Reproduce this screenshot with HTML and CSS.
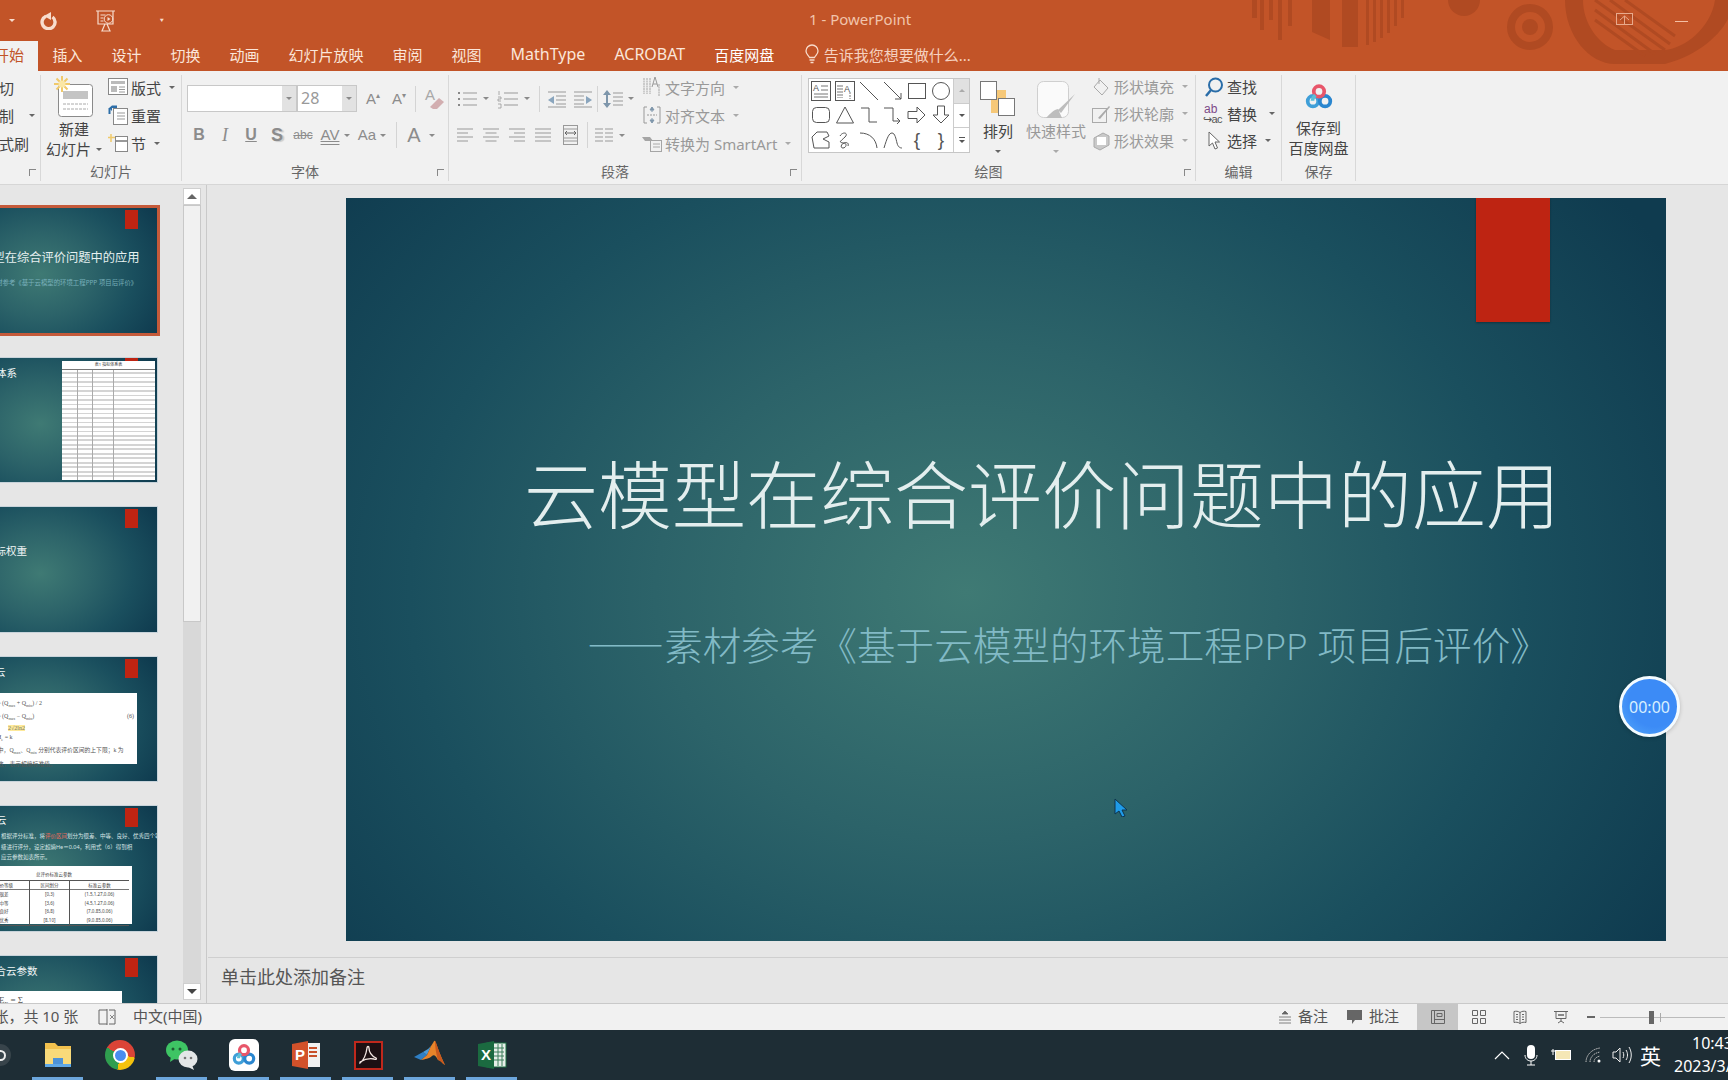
FILE: index.html
```html
<!DOCTYPE html>
<html lang="zh-CN">
<head>
<meta charset="utf-8">
<title>1 - PowerPoint</title>
<link rel="stylesheet" href="styles.css">
</head>
<body>
<svg class="defs" width="0" height="0">
  <defs>
    <symbol id="baidu" viewBox="0 0 30 30">
      <circle cx="8.5" cy="19.5" r="5.6" fill="none" stroke="#3f9fd8" stroke-width="4"/>
      <circle cx="21.5" cy="19.5" r="5.6" fill="none" stroke="#2a86cf" stroke-width="4"/>
      <circle cx="15" cy="9" r="5.6" fill="none" stroke="#e8566a" stroke-width="4"/>
      <path d="M11 13c-2 2-3 4-3 6" fill="none" stroke="#5bc0d8" stroke-width="4"/>
    </symbol>
  </defs>
</svg>

<header class="titlebar">
  <svg class="deco" width="600" height="64" viewBox="0 0 600 64">
    <g fill="#b04a22">
      <rect x="2" y="0" width="5" height="18"/><rect x="10" y="0" width="4" height="30"/><rect x="19" y="0" width="4" height="20"/><rect x="28" y="0" width="4" height="40"/><rect x="38" y="0" width="4" height="26"/>
      <path d="M62 0h18v40l-18-8z"/><rect x="92" y="0" width="16" height="47"/>
      <rect x="116" y="0" width="3" height="45"/><rect x="123" y="0" width="3" height="42"/><rect x="130" y="0" width="3" height="38"/><rect x="137" y="0" width="3" height="33"/><rect x="144" y="0" width="3" height="26"/><rect x="151" y="0" width="3" height="18"/>
      <circle cx="214" cy="0" r="16"/>
    </g>
    <circle cx="280" cy="27" r="19" fill="none" stroke="#b04a22" stroke-width="8"/>
    <circle cx="280" cy="27" r="8" fill="#b04a22"/>
    <path d="M315 0c0 35 24 64 50 64h50c34-8 68-36 68-64h-18c-4 28-30 48-50 50l-50 0c-16-6-32-26-32-50z" fill="#b04a22"/>
    <path d="M345 10l60 44M345 20l50 36M345 0l70 50M360 0l60 44M375 0l50 36" stroke="#b04a22" stroke-width="3"/>
  </svg>
  <div class="qat">
    <span class="caret caret-light"></span>
    <svg class="qat-undo" width="18" height="18" viewBox="0 0 18 18"><path d="M7 4.200A6.500 6.500 0 1 0 13.500 5" fill="none" stroke="#f7dccd" stroke-width="3.400"/><path d="M12 0L12 8 5 4z" fill="#f7dccd"/></svg>
    <svg class="qat-show" width="22" height="24" viewBox="0 0 22 24"><path d="M1 2h19M3 2v13h15V2M5.500 6h5M5.500 9h3M5.500 12h3M10 15l-3 7h8l-3-7" fill="none" stroke="#f7dccd" stroke-width="1.200"/><circle cx="13.500" cy="10" r="4.300" fill="none" stroke="#f7dccd"/><path d="M12.500 8v4l3-2z" fill="#f7dccd"/></svg>
    <span class="qat-more">⯆</span>
  </div>
  <div class="doc-title">1 - PowerPoint</div>
  <svg class="win-restore" width="17" height="12" viewBox="0 0 17 12"><rect x=".5" y=".5" width="16" height="11" fill="none" stroke="#e8a98c"/><path d="M8.500 3v8M4 7l4.500-4L13 7" fill="none" stroke="#e8a98c"/></svg>
  <span class="win-min"></span>
</header>

<nav class="tabs">
  <span class="tab tab-active">开始</span>
  <span class="tab">插入</span>
  <span class="tab">设计</span>
  <span class="tab">切换</span>
  <span class="tab">动画</span>
  <span class="tab">幻灯片放映</span>
  <span class="tab">审阅</span>
  <span class="tab">视图</span>
  <span class="tab tab-en">MathType</span>
  <span class="tab tab-en">ACROBAT</span>
  <span class="tab tab-strong">百度网盘</span>
  <span class="tell">
    <svg width="14" height="20" viewBox="0 0 14 20"><path d="M4.500 13.500C3 11 1 10 1 7a6 6 0 0 1 12 0c0 3-2 4-3.500 6.500zM4.500 16h5M5.500 18.500h3" fill="none" stroke="#f8dccc" stroke-width="1.300"/></svg>
    告诉我您想要做什么...
  </span>
</nav>

<section class="ribbon">
  <div class="group g-clip">
    <div class="stack clip-stack">
      <div class="srow">剪切</div>
      <div class="srow">复制<span class="caret c-clip"></span></div>
      <div class="srow">格式刷</div>
    </div>
    <div class="label"></div>
    <span class="launcher"></span>
  </div>

  <div class="group g-slides">
    <div class="body">
      <div class="big big-new">
        <svg width="42" height="42" viewBox="0 0 42 42">
          <rect x="4.500" y="8.500" width="34" height="32" rx="3" fill="#fff" stroke="#8a8a8a"/>
          <rect x="9" y="15" width="25" height="8" fill="#c4c4c4"/>
          <path d="M9 28h25M9 33h25" stroke="#aaa" stroke-dasharray="3 1"/>
          <g stroke="#f0c96a" stroke-width="2"><path d="M8 0v16M0 8h16M2.500 2.500l11 11M13.500 2.500l-11 11"/></g>
          <circle cx="8" cy="8" r="3.500" fill="#fbe7a6"/>
        </svg>
        <span class="big-text">新建</span>
        <span class="big-text">幻灯片<span class="caret c-near"></span></span>
      </div>
      <div class="stack">
        <div class="srow"><svg width="20" height="20" viewBox="0 0 20 20"><rect x=".5" y="1.500" width="19" height="16" fill="#fff" stroke="#888"/><rect x="3" y="4" width="14" height="3" fill="#bbb"/><rect x="3" y="9" width="6" height="6" fill="#bbb"/><path d="M11 10h6M11 12.500h6M11 15h6" stroke="#999"/></svg>版式<span class="caret c-near"></span></div>
        <div class="srow"><svg width="20" height="22" viewBox="0 0 20 22"><rect x="5.500" y="4.500" width="14" height="16" fill="#fff" stroke="#888"/><path d="M9 9h8M9 12h8M9 15h8" stroke="#999"/><path d="M9 1.500H4L1 4l3 3V4h5z" fill="#2d6ea8"/><path d="M1.500 4v6" stroke="#2d6ea8" stroke-width="2"/></svg>重置</div>
        <div class="srow"><svg width="20" height="20" viewBox="0 0 20 20"><rect x="7.500" y="3.500" width="12" height="15" fill="#fff" stroke="#888"/><rect x="8" y="7" width="11" height="2" fill="#999"/><path d="M3 1v8M0 4.500h7" stroke="#f0c96a" stroke-width="1.500"/></svg>节<span class="caret c-near"></span></div>
      </div>
    </div>
    <div class="label">幻灯片</div>
  </div>

  <div class="group g-font">
    <div class="tool-rows">
      <div class="trow font-r1">
        <span class="combo combo-name"><span class="combo-val"></span><span class="combo-btn"><span class="caret"></span></span></span>
        <span class="combo combo-size"><span class="combo-val">28</span><span class="combo-btn"><span class="caret"></span></span></span>
        <span class="glyph g-w24 grow-a">A<sup>▴</sup></span>
        <span class="glyph g-w24 grow-a">A<sup>▾</sup></span>
        <span class="sep s-a"></span>
        <svg class="clear" width="24" height="24" viewBox="0 0 24 24"><text x="3" y="13" class="mini-a">A</text><path d="M8 20l9-9 5 4-7 7h-4z" fill="#d2aeb0"/></svg>
      </div>
      <div class="trow font-r2">
        <span class="glyph g-w26 g-b">B</span>
        <span class="glyph g-w26 g-i">I</span>
        <span class="glyph g-w26 g-u">U</span>
        <span class="glyph g-w26 g-s">S</span>
        <span class="glyph g-w26 g-abc">abc</span>
        <span class="glyph g-w28 g-av">AV</span><span class="caret c-tight"></span>
        <span class="glyph g-w26 g-aa">Aa</span><span class="caret"></span>
        <span class="sep s-b"></span>
        <span class="glyph g-w22 g-ca">A</span><span class="caret c-ca"></span>
      </div>
    </div>
    <div class="label label-l">字体</div>
    <span class="launcher"></span>
  </div>

  <div class="group g-para">
    <div class="body">
      <div class="tool-rows para-left">
        <div class="trow para-r1">
          <svg width="24" height="24" viewBox="0 0 24 24"><path d="M7 6h14M7 12h14M7 18h14" stroke="#999" stroke-width="1.200"/><path d="M2 6h2M2 12h2M2 18h2" stroke="#888" stroke-width="2"/></svg><span class="caret c-para"></span>
          <svg width="24" height="24" viewBox="0 0 24 24"><path d="M7 6h14M7 12h14M7 18h14" stroke="#999" stroke-width="1.200"/><path d="M2 4v4M1 10h3v2H1v2h3M1 17h3v4H1" fill="none" stroke="#999" stroke-width=".8"/></svg><span class="caret c-para"></span>
          <span class="sep s-p1"></span>
          <svg width="24" height="24" viewBox="0 0 24 24"><path d="M3 5h18M11 9h10M11 13h10M11 17h10M3 20h18" stroke="#999"/><path d="M3 13l6-4v8z" fill="#8aa5bd"/></svg>
          <svg class="m2" width="24" height="24" viewBox="0 0 24 24"><path d="M3 5h18M3 9h10M3 13h10M3 17h10M3 20h18" stroke="#999"/><path d="M21 13l-6-4v8z" fill="#8aa5bd"/></svg>
          <span class="sep s-p2"></span>
          <svg class="m3" width="24" height="24" viewBox="0 0 24 24"><path d="M12 6h10M12 10h10M12 14h10M12 18h10" stroke="#999"/><path d="M6 3l4 5H7v8h3l-4 5-4-5h3V8H2z" fill="#7e96ab"/></svg><span class="caret c-para"></span>
        </div>
        <div class="trow para-r2">
          <svg width="24" height="24" viewBox="0 0 24 24"><path d="M4 6h16M4 10h11M4 14h16M4 18h11" stroke="#999"/></svg>
          <svg class="m2" width="24" height="24" viewBox="0 0 24 24"><path d="M4 6h16M6.500 10h11M4 14h16M6.500 18h11" stroke="#999"/></svg>
          <svg class="m2" width="24" height="24" viewBox="0 0 24 24"><path d="M4 6h16M9 10h11M4 14h16M9 18h11" stroke="#999"/></svg>
          <svg class="m2" width="24" height="24" viewBox="0 0 24 24"><path d="M4 6h16M4 10h16M4 14h16M4 18h16" stroke="#999"/></svg>
          <svg class="m3" width="24" height="24" viewBox="0 0 24 24"><rect x="5.500" y="2.500" width="14" height="19" fill="none" stroke="#999"/><path d="M6 6h13M6 18h13M6 15h13" stroke="#999"/><path d="M7 10h11M9 8l-2 2 2 2M16 8l2 2-2 2" fill="none" stroke="#666"/></svg>
          <span class="sep s-p3"></span>
          <svg width="24" height="24" viewBox="0 0 24 24"><path d="M3 6h8M3 10h8M3 14h8M3 18h8M13 6h8M13 10h8M13 14h8M13 18h8" stroke="#999"/></svg><span class="caret c-para"></span>
        </div>
      </div>
      <div class="stack para-right">
        <div class="srow dim"><svg width="20" height="22" viewBox="0 0 20 22"><path d="M2 2v16M5 2v16M8 2v16M17 8v12" stroke="#a5a5a5" stroke-width="1" stroke-dasharray="2 .5"/><path d="M10 11l3-10 3 10M11 8h4" fill="none" stroke="#999"/></svg>文字方向<span class="caret c-near"></span></div>
        <div class="srow dim"><svg width="20" height="22" viewBox="0 0 20 22"><path d="M5 3H2v16h3M15 3h3v16h-3" fill="none" stroke="#999"/><path d="M5 11h10" stroke="#999" stroke-dasharray="2 1"/><path d="M10 3l2 3H8zM10 19l2-3H8zM10 5v3M10 14v3" stroke="#7e96ab" fill="#7e96ab"/></svg>对齐文本<span class="caret c-near"></span></div>
        <div class="srow dim"><svg width="20" height="20" viewBox="0 0 20 20"><path d="M0 4h8l3 4H3z" fill="#a5a5a5"/><rect x="8.500" y="7.500" width="11" height="11" fill="none" stroke="#a5a5a5"/><path d="M11 11h7M11 14h7" stroke="#aaa"/></svg>转换为 SmartArt<span class="caret c-near"></span></div>
      </div>
    </div>
    <div class="label label-l">段落</div>
    <span class="launcher"></span>
  </div>

  <div class="group g-draw">
    <div class="body">
      <div class="gallery">
        <div class="shapes">
          <svg width="20" height="20" viewBox="0 0 20 20"><rect x=".5" y=".5" width="19" height="19" fill="none" stroke="#555"/><text x="2" y="10" class="mini-t">A</text><path d="M10 5h7M10 9h7M3 13h14M3 16h14" stroke="#777"/></svg>
          <svg width="20" height="20" viewBox="0 0 20 20"><rect x=".5" y=".5" width="19" height="19" fill="none" stroke="#555"/><path d="M3 4v13M5 4v13M7 4v13M15 11v7" stroke="#777" stroke-dasharray="2 1"/><text x="9" y="11" class="mini-t">A</text></svg>
          <svg width="20" height="20" viewBox="0 0 20 20"><path d="M1 1l18 18" stroke="#555"/></svg>
          <svg width="20" height="20" viewBox="0 0 20 20"><path d="M1 1l17 17M18 12v6h-6" fill="none" stroke="#555"/></svg>
          <svg width="20" height="20" viewBox="0 0 20 20"><rect x="1.500" y="2.500" width="17" height="15" fill="none" stroke="#555"/></svg>
          <svg width="20" height="20" viewBox="0 0 20 20"><circle cx="10" cy="10" r="8.500" fill="none" stroke="#555"/></svg>
          <svg width="20" height="20" viewBox="0 0 20 20"><rect x="1.500" y="2.500" width="17" height="15" rx="4" fill="none" stroke="#555"/></svg>
          <svg width="20" height="20" viewBox="0 0 20 20"><path d="M10 2l8.500 16h-17z" fill="none" stroke="#555"/></svg>
          <svg width="20" height="20" viewBox="0 0 20 20"><path d="M2 3h8v14h8" fill="none" stroke="#555"/></svg>
          <svg width="20" height="20" viewBox="0 0 20 20"><path d="M1 3h9v13h6M14 13l3 3-3 3" fill="none" stroke="#555"/></svg>
          <svg width="20" height="20" viewBox="0 0 20 20"><path d="M1 6.500h9V2l8 8-8 8v-4.500H1z" fill="none" stroke="#555"/></svg>
          <svg width="20" height="20" viewBox="0 0 20 20"><path d="M6.500 1v9H2l8 8 8-8h-4.500V1z" fill="none" stroke="#555"/></svg>
          <svg width="20" height="20" viewBox="0 0 20 20"><path d="M1 7l5-5h10l2 4-6 3 6 3v6H3z" fill="none" stroke="#555"/></svg>
          <svg width="20" height="20" viewBox="0 0 20 20"><path d="M5 6c3-5 9-3 5 1S3 12 8 13c5 0 3 5 0 5s-2-4 1-5 5 0 4 3" fill="none" stroke="#555"/></svg>
          <svg width="20" height="20" viewBox="0 0 20 20"><path d="M1 3c10 0 16 6 17 15" fill="none" stroke="#555"/></svg>
          <svg width="20" height="20" viewBox="0 0 20 20"><path d="M1 18C4 8 6 3 9 3s4 6 5 10 3 5 5 5" fill="none" stroke="#555"/></svg>
          <span class="brace">{</span>
          <span class="brace">}</span>
        </div>
        <div class="gal-scroll">
          <span class="gal-btn gal-off"><span class="tri-up"></span></span>
          <span class="gal-btn"><span class="caret"></span></span>
          <span class="gal-btn"><span class="more-bar"></span><span class="caret"></span></span>
        </div>
      </div>
      <div class="big big-arr">
        <svg width="38" height="38" viewBox="0 0 38 38"><rect x="12" y="10" width="15" height="23" fill="#f6c878"/><rect x="1.500" y="1.500" width="16" height="18" fill="#fff" stroke="#777"/><rect x="19.500" y="18.500" width="16" height="17" fill="#fff" stroke="#777"/></svg>
        <span class="big-text">排列</span>
        <span class="caret c-big"></span>
      </div>
      <div class="big big-style dim">
        <svg width="40" height="40" viewBox="0 0 40 40"><rect x="1.500" y="1.500" width="31" height="36" rx="6" fill="#fafafa" stroke="#cfcfcf"/><path d="M39 14L22 30l3 3zM22 29c-5 1-8 5-12 9h16z" fill="#bdbdbd"/></svg>
        <span class="big-text">快速样式</span>
        <span class="caret c-big"></span>
      </div>
      <div class="stack shape-fx">
        <div class="srow dim"><svg width="20" height="20" viewBox="0 0 20 20"><path d="M9 3l8 8-6 7-8-8z" fill="none" stroke="#aaa"/><path d="M8 1v6" stroke="#aaa"/></svg>形状填充<span class="caret c-near"></span></div>
        <div class="srow dim"><svg width="20" height="20" viewBox="0 0 20 20"><rect x="1.500" y="4.500" width="14" height="14" fill="none" stroke="#aaa"/><path d="M7 14L18 2l1 1L9 15z" fill="#aaa"/></svg>形状轮廓<span class="caret c-near"></span></div>
        <div class="srow dim"><svg width="20" height="20" viewBox="0 0 20 20"><path d="M3 7l9-5 6 3v9l-9 5-6-3z" fill="#c9c9c9" stroke="#aaa"/><rect x="6" y="6" width="9" height="8" fill="#fff"/></svg>形状效果<span class="caret c-near"></span></div>
      </div>
    </div>
    <div class="label label-l">绘图</div>
    <span class="launcher"></span>
  </div>

  <div class="group g-edit">
    <div class="stack edit-stack">
      <div class="srow"><svg width="20" height="20" viewBox="0 0 20 20"><circle cx="11.500" cy="8" r="6.500" fill="none" stroke="#2a6da8" stroke-width="2"/><path d="M7 13l-5 6" stroke="#2a6da8" stroke-width="2.500"/></svg>查找</div>
      <div class="srow"><span class="abac"><span class="ab">ab</span><span class="ac">↪ac</span></span>替换<span class="caret c-edit"></span></div>
      <div class="srow"><svg width="20" height="20" viewBox="0 0 20 20"><path d="M5 1v14l3.500-3 2.500 6 2.500-1-2.500-6h4.500z" fill="#fff" stroke="#666"/></svg>选择<span class="caret c-near"></span></div>
    </div>
    <div class="label">编辑</div>
  </div>

  <div class="group g-save">
    <div class="body save-body">
      <svg class="save-ico" width="28" height="28"><use href="#baidu"/></svg>
      <span class="big-text">保存到</span>
      <span class="big-text">百度网盘</span>
    </div>
    <div class="label">保存</div>
  </div>
</section>

<main class="workspace">
  <aside class="sidebar">
    <div class="thumbs">
      <div class="thumb thumb-sel sl-bg">
        <i class="mark"></i>
        <p class="t1-title">云模型在综合评价问题中的应用</p>
        <p class="t1-sub">——素材参考《基于云模型的环境工程PPP 项目后评价》</p>
      </div>
      <div class="thumb sl-bg thumb-2">
        <i class="mark mark-dim"></i>
        <p class="t-head">评价指标体系</p>
        <div class="mini-table"><span class="mt-cap">表1 指标体系表</span></div>
      </div>
      <div class="thumb sl-bg">
        <i class="mark"></i>
        <p class="t-head t-head-3">确定指标权重</p>
      </div>
      <div class="thumb sl-bg">
        <i class="mark"></i>
        <p class="t-head t-head-4">计算评价云</p>
        <div class="mini-box">
          <p class="f f1">E<sub>x</sub> = (Q<sub>max</sub> + Q<sub>min</sub>) / 2</p>
          <p class="f f2">E<sub>n</sub> = (Q<sub>max</sub> − Q<sub>min</sub>)<span class="f-no">(6)</span></p>
          <p class="f f3"><mark>2√2ln2</mark></p>
          <p class="f">H<sub>e</sub> = k</p>
          <p class="f f4">式中，Q<sub>max</sub>、Q<sub>min</sub> 分别代表评价区间的上下限；k 为</p>
          <p class="f f4">常数，表示超熵标准值。</p>
        </div>
      </div>
      <div class="thumb sl-bg">
        <i class="mark"></i>
        <p class="t-head t-head-5">生成标准云</p>
        <div class="mini-lines">
          <p>根据评分标准，将<b>评价区间</b>划分为很差、中等、良好、优秀四个等</p>
          <p>级进行评分，设定超熵He＝0.04，利用式（6）得到相</p>
          <p>应云参数如表所示。</p>
        </div>
        <div class="mini-box2">
          <p class="mb-cap">总评价标准云参数</p>
          <div class="mb-table">
            <div class="mb-row mb-h"><span>评价等级</span><span>区间划分</span><span>标准云参数</span></div>
            <div class="mb-row"><span>很差</span><span>[0,3)</span><span>(1.5,1.27,0.06)</span></div>
            <div class="mb-row"><span>中等</span><span>[3,6)</span><span>(4.5,1.27,0.06)</span></div>
            <div class="mb-row"><span>良好</span><span>[6,8)</span><span>(7,0.85,0.06)</span></div>
            <div class="mb-row"><span>优秀</span><span>[8,10]</span><span>(9,0.85,0.06)</span></div>
          </div>
        </div>
      </div>
      <div class="thumb sl-bg">
        <i class="mark"></i>
        <p class="t-head t-head-6">计算综合云参数</p>
        <div class="mini-box3">E<sub>x</sub> = Σ</div>
      </div>
    </div>
    <div class="vscroll">
      <span class="vs-btn"><span class="tri-up tri-big"></span></span>
      <span class="vs-thumb"></span>
      <span class="vs-track"></span>
      <span class="vs-btn"><span class="caret tri-big-d"></span></span>
    </div>
  </aside>

  <div class="editor">
    <div class="stage">
      <div class="slide sl-bg">
        <i class="slide-mark"></i>
        <h1 class="slide-title">云模型在综合评价问题中的应用</h1>
        <p class="slide-sub">——素材参考《基于云模型的环境工程<span class="ppp">PPP </span>项目后评价》</p>
      </div>
    </div>
    <div class="notes">单击此处添加备注</div>
  </div>
</main>

<footer class="status">
  <span class="st-count">第 1 张，共 10 张</span>
  <svg class="st-ico" width="18" height="16" viewBox="0 0 18 16"><path d="M9 1H1v14h8M9 0v16M11 1h6v14h-6" fill="none" stroke="#666"/><path d="M12 6l4 4M16 6l-4 4" stroke="#888"/></svg>
  <span class="st-lang">中文(中国)</span>
  <span class="st-right">
    <svg width="14" height="14" viewBox="0 0 14 14"><path d="M7 1l3 3H4zM1 7h12M1 10h12M1 13h12" stroke="#666" fill="#666" stroke-width=".8"/></svg>
    <span class="st-t">备注</span>
    <svg class="st-cm" width="16" height="16" viewBox="0 0 16 16"><path d="M0 1h15v10H8l-3 4v-4H0z" fill="#666"/></svg>
    <span class="st-t">批注</span>
    <span class="view view-on"><svg width="14" height="14" viewBox="0 0 14 14"><path d="M.5.5h13v13H.5zM3.500.5v13M3.500 9.500h10M6 3.500h5v3H6z" fill="none" stroke="#666"/></svg></span>
    <span class="view"><svg width="14" height="14" viewBox="0 0 14 14"><path d="M.5.500h5v5h-5zM8.500.500h5v5h-5zM.5 8.500h5v5h-5zM8.500 8.500h5v5h-5z" fill="none" stroke="#666"/></svg></span>
    <span class="view"><svg width="14" height="14" viewBox="0 0 14 14"><path d="M7 2.500C5 1 3 1 1 1.500v11c2-.5 4-.5 6 1 2-1.500 4-1.500 6-1v-11C11 1 9 1 7 2.500zM7 2.500v11M3 4.500h2M3 7h2M3 9.500h2M9 4.500h2M9 7h2M9 9.500h2" fill="none" stroke="#666"/></svg></span>
    <span class="view"><svg width="14" height="14" viewBox="0 0 14 14"><path d="M0 1.500h14M2 1.500v7h10v-7M7 8.500V11M4 13l3-2 3 2" fill="none" stroke="#666"/><rect x="4" y="4" width="6" height="2" fill="#888"/></svg></span>
    <span class="zoom-minus"></span>
    <span class="slider"><i class="slider-tick"></i><i class="slider-thumb"></i></span>
  </span>
</footer>

<footer class="taskbar">
  <span class="cortana"><span class="cortana-ring"></span></span>
  <div class="apps">
    <span class="app app-on">
      <svg width="30" height="28" viewBox="0 0 30 28"><path d="M2 2h10l3 3h13v20H2z" fill="#f2c14e"/><rect x="2" y="8" width="26" height="15" fill="#f8da7a"/><rect x="10" y="17" width="10" height="6" fill="#4d93d8"/><rect x="2" y="23" width="26" height="3" fill="#5fa8e6"/></svg>
    </span>
    <span class="app"><span class="chrome"><span class="chrome-dot"></span></span></span>
    <span class="app app-on">
      <svg width="32" height="30" viewBox="0 0 32 30"><ellipse cx="11" cy="10" rx="11" ry="9.500" fill="#3ec464"/><path d="M5 16l-1 6 6-4z" fill="#3ec464"/><circle cx="7" cy="9" r="1.500" fill="#1e5a32"/><circle cx="14" cy="9" r="1.500" fill="#1e5a32"/><ellipse cx="22" cy="19" rx="9.500" ry="8.500" fill="#e3e6e7"/><path d="M26 25l2 5-6-3z" fill="#e3e6e7"/><circle cx="19" cy="18" r="1.300" fill="#777"/><circle cx="25" cy="18" r="1.300" fill="#777"/></svg>
    </span>
    <span class="app app-on"><span class="bd-tile"><svg width="24" height="24"><use href="#baidu"/></svg></span></span>
    <span class="app app-on">
      <svg width="30" height="30" viewBox="0 0 30 30"><rect x="10" y="3" width="19" height="24" fill="#f1f1f1"/><path d="M18 8h8M18 12h8M18 16h8" stroke="#c8502a" stroke-width="2"/><path d="M1 4l16-3v28L1 26z" fill="#d2512a"/></svg>
      <span class="p-letter">P</span>
    </span>
    <span class="app app-on"><span class="acro"><svg width="22" height="22" viewBox="0 0 22 22"><path d="M3 19c4-3 6-8 7-15 0-2 2-2 2 0 0 5 3 8 7 10 1 1 0 2-2 1-5-1-9 0-14 3z" fill="none" stroke="#f3e6e2" stroke-width="1.300"/></svg></span></span>
    <span class="app app-on">
      <svg width="32" height="30" viewBox="0 0 32 30"><path d="M0 17l9-5 4 3-6 5z" fill="#2f7fc4"/><path d="M9 12l5-3 3-3-4 9z" fill="#4a9ad8"/><path d="M7 20l6-5 4-9c2-2 3-6 4-5s4 12 10 24c-3-2-5-5-7-5-2-4-4-6-6-4-3 3-7 3-11 4z" fill="#e8842a"/><path d="M21 1c1 0 4 12 10 24-3-2-5-5-7-5-2-6-3-14-3-19z" fill="#c9581d"/></svg>
    </span>
    <span class="app app-on">
      <svg width="30" height="30" viewBox="0 0 30 30"><rect x="10" y="3" width="19" height="24" fill="#e7efe9" stroke="#1d6f42"/><path d="M17 8h10M17 12h10M17 16h10M17 20h10M21 4v22M25 4v22" stroke="#3c7f5b"/><path d="M1 4l16-3v28L1 26z" fill="#1b6a40"/></svg>
      <span class="x-letter">X</span>
    </span>
  </div>
  <div class="tray">
    <svg width="16" height="9" viewBox="0 0 16 9"><path d="M1 8l7-7 7 7" fill="none" stroke="#fff" stroke-width="1.200"/></svg>
    <svg class="tr-mic" width="14" height="21" viewBox="0 0 14 21"><rect x="3" y="0" width="8" height="14" rx="4" fill="#fff"/><path d="M1 10c0 8 12 8 12 0M7 16v4M3 20h8" fill="none" stroke="#fff"/></svg>
    <svg class="tr-bat" width="21" height="12" viewBox="0 0 21 12"><rect x="4.500" y="1.500" width="15" height="9" fill="#f5e7b5" stroke="#fff"/><path d="M0 2h4M2 0v6" stroke="#fff"/></svg>
    <svg class="tr-wifi" width="16" height="16" viewBox="0 0 16 16"><path d="M1 15C1 8 7 2 15 1M5 15c0-5 4-9 10-10M9 15c0-3 2-5 6-6" fill="none" stroke="#bbb" stroke-dasharray="1.500 .7"/><circle cx="14" cy="14" r="1.500" fill="#fff"/></svg>
    <svg class="tr-vol" width="20" height="18" viewBox="0 0 20 18"><path d="M1 6h3l4-4v14l-4-4H1zM11 6c1 2 1 4 0 6M14 4c2 3 2 7 0 10M17 1c3 5 3 11 0 16" fill="none" stroke="#eee"/></svg>
    <span class="ime">英</span>
    <span class="clock"><span>10:43</span><span>2023/3/22</span></span>
  </div>
</footer>

<div class="timer"><span>00:00</span></div>
<svg class="cursor" width="14" height="19" viewBox="0 0 14 19"><path d="M1 1v15l4-3 3 6 3-1-3-6h5z" fill="#1f9be8" stroke="#0d3550"/></svg>
</body>
</html>
```
FILE: styles.css
```css
* { box-sizing: border-box; }
html, body { margin: 0; height: 100%; }
body {
  width: 1728px;
  height: 1080px;
  overflow: hidden;
  display: flex;
  flex-direction: column;
  position: relative;
  font-family: "Noto Sans", "Noto Sans CJK SC", sans-serif;
  font-size: 15px;
  color: #444;
  background: #e6e6e6;
}
.defs { position: absolute; }
p, h1 { margin: 0; font-weight: normal; }

/* title bar */
.titlebar {
  height: 41px;
  flex: none;
  position: relative;
  background: #c25428;
  display: flex;
  align-items: center;
}
.deco { position: absolute; left: 1250px; top: 0; }
.qat { display: flex; align-items: center; height: 38px; position: relative; }
.qat-undo { margin-left: 24px; margin-top: 1px; }
.qat-show { margin-left: 38px; }
.qat-more { margin-left: 42px; color: #f7dccd; font-size: 7px; }
.doc-title {
  position: absolute;
  left: 809px;
  top: 8px;
  color: #f1c4ac;
  font-size: 15px;
  line-height: 22px;
}
.win-restore { position: absolute; left: 1616px; top: 13px; }
.win-min { position: absolute; left: 1675px; top: 21px; width: 13px; height: 1px; background: #f4bfa4; }

/* carets */
.caret {
  display: inline-block;
  flex: none;
  width: 0;
  height: 0;
  border-left: 3px solid transparent;
  border-right: 3px solid transparent;
  border-top: 3px solid #8a8a8a;
}
.caret-light { border-top-color: #f7dccd; margin-left: 9px; }
.c-near { margin-left: 5px; border-top-color: #666; }
.dim .c-near { border-top-color: #aaa; }
.c-clip { margin-left: 12px; border-top-color: #666; }
.c-edit { margin-left: 9px; border-top-color: #666; }
.c-tight { margin-left: 0; margin-right: 4px; }
.c-para { margin: 0 8px 0 3px; }
.c-ca { margin-left: 4px; }
.c-big { margin-top: 9px; border-top-color: #666; }
.tri-up {
  width: 0;
  height: 0;
  border-left: 3px solid transparent;
  border-right: 3px solid transparent;
  border-bottom: 3px solid #aaa;
}

/* tabs */
.tabs {
  height: 30px;
  flex: none;
  background: #c25428;
  display: flex;
  align-items: center;
  color: #fbe6da;
  font-size: 15px;
  margin-left: -7px;
}
.tab { padding: 0 14.500px 4px; white-space: nowrap; height: 30px; display: flex; align-items: center; }
.tab-active {
  background: #f1f1f1;
  color: #c25428;
  padding: 0 14px 4px 0;
  width: 45px;
  justify-content: flex-end;
}
.tab-en { font-size: 16px; }
.tab-strong { color: #fff; }
.tell { display: flex; align-items: center; gap: 5px; margin-left: 16px; padding-bottom: 4px; color: #f6d2c0; font-size: 15px; }

/* ribbon */
.ribbon {
  height: 114px;
  flex: none;
  background: #f1f1f1;
  border-bottom: 1px solid #d6d6d6;
  display: flex;
}
.group {
  position: relative;
  flex: none;
  display: flex;
  flex-direction: column;
  margin: 4px 0 3px;
  border-right: 1px solid #d8d8d8;
  height: 106px;
}
.g-clip { width: 41px; }
.g-slides { width: 141px; }
.g-font { width: 267px; }
.g-para { width: 353px; }
.g-draw { width: 394px; }
.g-edit { width: 86px; }
.g-save { width: 74px; }
.body { flex: 1; display: flex; min-height: 0; }
.label {
  flex: none;
  height: 22px;
  line-height: 26px;
  font-size: 14px;
  color: #666;
  text-align: center;
}
.label-l { padding-right: 20px; }
.launcher {
  position: absolute;
  right: 4px;
  bottom: 5px;
  width: 7px;
  height: 7px;
  border-left: 1px solid #888;
  border-top: 1px solid #888;
}
.stack { display: flex; flex-direction: column; margin-top: -2px; }
.srow {
  height: 28px;
  flex: none;
  display: flex;
  align-items: center;
  gap: 3px;
  white-space: nowrap;
  font-size: 15px;
}
.srow svg { flex: none; }
.dim { color: #999; }
.clip-stack { flex: 1; margin-left: -16px; white-space: nowrap; min-width: 0; }
.big { display: flex; flex-direction: column; align-items: center; flex: none; }
.big-text { line-height: 20px; font-size: 15px; white-space: nowrap; display: flex; align-items: center; }
.big-new { width: 66px; padding-top: 1px; }
.big-new svg { margin-left: 2px; margin-bottom: 1px; }
.g-slides .stack { margin-left: 1px; }

/* tool rows */
.tool-rows { flex: none; padding-top: 10px; }
.g-font .tool-rows { flex: 1; }
.trow { display: flex; align-items: center; }
.font-r1 { height: 27px; padding-left: 5px; }
.font-r2 { height: 28px; margin-top: 9px; padding-left: 4px; }
.combo {
  height: 27px;
  background: #fff;
  border: 1px solid #c8c8c8;
  display: flex;
  flex: none;
  color: #999;
  font-size: 16px;
}
.combo-name { width: 110px; }
.combo-size { width: 60px; margin-right: 2px; }
.combo-val { flex: 1; line-height: 25px; padding-left: 3px; }
.combo-btn { width: 14px; background: #e2e2e2; display: flex; align-items: center; justify-content: center; }
.glyph {
  flex: none;
  text-align: center;
  color: #8c8c8c;
  font-family: "Liberation Sans", sans-serif;
  line-height: 24px;
  font-size: 16px;
}
.g-w22 { width: 22px; }
.g-w24 { width: 24px; }
.g-w26 { width: 26px; }
.g-w28 { width: 28px; }
.grow-a { margin-left: 2px; font-size: 15px; }
.grow-a sup { font-size: 8px; line-height: 0; }
.sep { flex: none; width: 1px; height: 26px; background: #d4d4d4; }
.s-a { margin: 0 4px 0 4px; }
.s-b { margin: 0 6px 0 10px; }
.clear { flex: none; margin-left: 2px; }
.mini-a { font: 15px "Liberation Sans", sans-serif; fill: #a8a8a8; }
.mini-t { font: 9px "Liberation Sans", sans-serif; fill: #555; }
.g-b { font-weight: bold; }
.g-i { font-family: "Liberation Serif", serif; font-style: italic; font-size: 18px; }
.g-u { text-decoration: underline; font-weight: 600; }
.g-s { font-weight: bold; font-size: 18px; text-shadow: 2px 1px 1px #ccc; }
.g-abc { font-size: 12px; text-decoration: line-through; }
.g-av { font-size: 15px; text-decoration: underline; text-decoration-style: double; }
.g-aa { font-size: 15px; }
.g-ca { font-size: 20px; font-weight: 500; }

.para-left { width: 186px; padding-left: 7px; }
.para-r1 { height: 27px; }
.para-r2 { height: 28px; margin-top: 9px; margin-left: -3px; }
.m2 { margin-left: 2px; }
.m3 { margin-left: 3px; }
.para-r1 svg, .para-r2 svg { flex: none; }
.s-p1 { margin: 0 5px 0 1px; }
.s-p2 { margin: 0 0 0 2px; }
.s-p3 { margin: 0 4px 0 5px; }
.para-right { padding-left: 7px; }

/* draw */
.gallery {
  flex: none;
  width: 162px;
  height: 75px;
  margin: 3px 0 0 6px;
  background: #fff;
  border: 1px solid #c6c6c6;
  display: flex;
}
.shapes {
  width: 144px;
  display: grid;
  grid-template-columns: repeat(6, 24px);
  grid-auto-rows: 24.300px;
  justify-items: center;
  align-items: center;
}
.brace { font: 19px "Liberation Sans", sans-serif; color: #555; line-height: 20px; }
.gal-scroll { flex: 1; display: flex; flex-direction: column; border-left: 1px solid #ccc; }
.gal-btn { flex: 1; display: flex; flex-direction: column; gap: 2px; align-items: center; justify-content: center; border-bottom: 1px solid #ccc; }
.gal-btn:last-child { border-bottom: 0; }
.gal-off { background: #e1e1e1; }
.gal-btn .caret { border-top-color: #555; }
.more-bar { width: 6px; height: 1px; background: #555; }
.big-arr { width: 46px; margin-left: 5px; padding-top: 5px; }
.big-arr svg { margin-bottom: 3px; }
.big-style { width: 60px; margin-left: 5px; padding-top: 5px; }
.big-style svg { margin-bottom: 1px; }
.big-style .c-big { border-top-color: #aaa; }
.shape-fx { margin-left: 5px; }
.shape-fx .srow { height: 27px; }

/* edit, save */
.edit-stack { flex: 1; padding-left: 8px; }
.edit-stack .srow { height: 27px; }
.abac { width: 20px; display: flex; flex-direction: column; font: 10px/10px "Liberation Sans", sans-serif; flex: none; }
.ab { color: #7d4a88; font-size: 12px; }
.ac { color: #555; font-size: 11px; white-space: nowrap; margin-left: -1px; letter-spacing: -.5px; }
.save-body { flex-direction: column; align-items: center; padding-top: 8px; }
.save-ico { margin-bottom: 7px; flex: none; }

/* workspace */
.workspace { flex: 1; display: flex; min-height: 0; }
.sidebar {
  width: 207px;
  flex: none;
  display: flex;
  overflow: hidden;
  border-right: 1px solid #c9c9c9;
}
.thumbs {
  width: 183px;
  flex: none;
  display: flex;
  flex-direction: column;
  gap: 25px;
  padding: 23px 0 0 0;
}
.sl-bg {
  background: radial-gradient(ellipse 62% 88% at 47% 53%, #3f7a74 0%, #2c6369 38%, #1a4f5e 68%, #0f3b4f 100%);
}
.thumb {
  flex: none;
  position: relative;
  width: 220px;
  height: 124.600px;
  margin-left: -63px;
  overflow: hidden;
  outline: 1px solid #c8d3da;
  color: #fff;
}
.thumb-sel { outline: 1px solid #fff; overflow: visible; }
.thumb-sel::after {
  content: "";
  position: absolute;
  inset: -3px;
  border: 3px solid #c55a3a;
  pointer-events: none;
}
.mark { position: absolute; left: 188px; top: 2px; width: 13px; height: 19px; background: #be2412; }
.mark-dim { top: -1px; }
.t1-title { font-size: 12.250px; line-height: 16px; padding: 42px 0 0 31px; color: #e6f0f0; white-space: nowrap; }
.t1-sub { font-size: 6.400px; line-height: 8px; padding: 13px 0 0 40px; color: #79b0bb; white-space: nowrap; }
.t-head { font-size: 10.500px; line-height: 14px; color: #f2f6f6; white-space: nowrap; padding-top: 8px; padding-left: 17px; }
.t-head-3 { padding-top: 37px; padding-left: 27px; }
.t-head-4 { padding-left: 16px; }
.t-head-5 { padding-top: 7px; padding-left: 17px; }
.t-head-6 { padding-top: 8px; padding-left: 27px; }
.mini-table {
  position: absolute;
  left: 125px;
  top: 3px;
  width: 93px;
  height: 119px;
  background:
    linear-gradient(#777, #777) 0 8px / 100% 1px no-repeat,
    linear-gradient(#aaa, #aaa) 15px 8px / 1px 100% no-repeat,
    linear-gradient(#aaa, #aaa) 30px 8px / 1px 100% no-repeat,
    linear-gradient(#aaa, #aaa) 51px 8px / 1px 100% no-repeat,
    repeating-linear-gradient(#fff 0 2px, #d4d4d4 2px 3.500px, #fff 3.500px 4.500px);
  background-color: #fff;
}
.mt-cap { display: block; background: #fff; height: 8px; font-size: 4px; line-height: 8px; color: #333; text-align: center; }
.mini-box {
  position: absolute;
  left: 0;
  top: 36px;
  width: 200px;
  height: 71px;
  background: #fff;
  color: #555;
  font-family: "Liberation Serif", "Noto Sans CJK SC", serif;
  padding: 5px 3px 0 60px;
}
.f { font-size: 6px; line-height: 10px; white-space: nowrap; position: relative; }
.f sub { font-size: 4px; }
.f1 { margin-left: -7px; }
.f2 { margin-left: -7px; }
.f-no { position: absolute; right: 0; top: 0; }
.f3 { line-height: 8px; margin-left: 11px; }
.f3 mark { background: #fde99a; color: #776; }
.f4 { font-size: 5.800px; margin-left: -5px; }
.mini-lines { padding: 4px 0 0 64px; font-size: 5.500px; line-height: 10.500px; white-space: nowrap; color: #d9e6e6; }
.mini-lines b { color: #e86a5a; font-weight: normal; }
.mini-box2 {
  position: absolute;
  left: 0;
  top: 60px;
  width: 195px;
  height: 58px;
  background: #fff;
  color: #444;
  padding: 4px 3px 0 42px;
  font-size: 4.500px;
}
.mb-cap { text-align: center; line-height: 8px; padding-bottom: 2px; }
.mb-table { border-top: 1px solid #555; border-bottom: 1px solid #555; }
.mb-row { display: grid; grid-template-columns: 50px 40px 60px; height: 8.700px; line-height: 8.700px; text-align: center; white-space: nowrap; }
.mb-row span + span { border-left: 1px solid #555; }
.mb-h { border-bottom: 1px solid #777; }
.mini-box3 { position: absolute; left: 60px; top: 35px; width: 125px; height: 30px; background: #fff; color: #555; font: 9px "Liberation Serif", serif; padding: 4px 0 0 2px; }

.vscroll { width: 18px; flex: none; display: flex; flex-direction: column; margin: 3px 0; background: #d8d8d8; }
.vs-btn { height: 17px; flex: none; background: #fff; border: 1px solid #cfcfcf; display: flex; align-items: center; justify-content: center; }
.vs-thumb { height: 417px; flex: none; background: #f1f1f1; border: 1px solid #c8c8c8; }
.vs-track { flex: 1; }
.tri-big { border-left-width: 5px; border-right-width: 5px; border-bottom: 5px solid #666; }
.tri-big-d { border-left-width: 5px; border-right-width: 5px; border-top: 5px solid #444; }

/* editor */
.editor { flex: 1; display: flex; flex-direction: column; min-width: 0; }
.stage { flex: 1; padding: 13px 0 0 139px; min-height: 0; }
.slide { position: relative; width: 1320px; height: 743px; color: #e1ecec; overflow: hidden; }
.slide-mark { position: absolute; left: 1130px; top: 0; width: 74px; height: 124px; background: #be2412; box-shadow: 0 1px 2px rgba(0,0,0,.3); }
.slide-title {
  font-family: "Noto Sans CJK SC", sans-serif;
  font-weight: 300;
  font-size: 74px;
  line-height: 100px;
  padding: 243px 0 0 178px;
  color: #e3eeee;
  white-space: nowrap;
}
.slide-sub {
  font-family: "Noto Sans CJK SC", sans-serif;
  font-weight: 300;
  font-size: 38.600px;
  line-height: 50px;
  margin-top: 77px;
  padding-left: 241px;
  color: #82bac6;
  white-space: nowrap;
}
.ppp { font-family: "Open Sans", sans-serif; font-weight: 300; font-size: 37px; }
.notes {
  height: 46px;
  flex: none;
  border-top: 1px solid #cfcfcf;
  margin-left: 1px;
  padding-left: 13px;
  font-size: 18px;
  line-height: 38px;
  color: #555;
}

/* status */
.status {
  height: 27px;
  flex: none;
  background: #f1f1f1;
  border-top: 1px solid #c9c9c9;
  display: flex;
  align-items: center;
  font-size: 15px;
  color: #555;
}
.st-count { margin: -3px 0 0 -38px; white-space: nowrap; width: 116px; flex: none; }
.st-ico { margin-left: 20px; flex: none; }
.st-lang { margin: -3px 0 0 17px; white-space: nowrap; }
.st-right { margin-left: auto; display: flex; align-items: center; height: 100%; }
.st-t { margin: -3px 0 0 6px; }
.st-cm { margin-left: 19px; }
.view { width: 41px; height: 100%; display: flex; align-items: center; justify-content: center; }
.view-on { background: #c6c6c6; margin-left: 18px; }
.zoom-minus { width: 8px; height: 2px; background: #666; margin-left: 6px; }
.slider { position: relative; width: 125px; height: 1px; background: #bbb; margin: 0 3px 0 5px; }
.slider-thumb { position: absolute; left: 49px; top: -6px; width: 5px; height: 13px; background: #666; }
.slider-tick { position: absolute; left: 60px; top: -4px; width: 1px; height: 9px; background: #aaa; }

/* taskbar */
.taskbar {
  height: 50px;
  flex: none;
  background: #1e2d35;
  display: flex;
  align-items: center;
  color: #fff;
  position: relative;
}
.cortana { width: 22px; height: 22px; border-radius: 50%; background: #38444b; margin-left: -11px; flex: none; display: flex; align-items: center; justify-content: center; }
.cortana-ring { width: 11px; height: 11px; border: 2px solid #eee; border-radius: 50%; }
.apps { display: flex; margin-left: 16px; height: 100%; }
.app {
  width: 62px;
  height: 100%;
  display: flex;
  align-items: center;
  justify-content: center;
  position: relative;
}
.app-on::after { content: ""; position: absolute; left: 5px; right: 6px; bottom: 0; height: 3px; background: #6ca6dc; }
.chrome {
  width: 30px;
  height: 30px;
  border-radius: 50%;
  background: conic-gradient(from -60deg, #db4437 0 160deg, #f4c20d 160deg 250deg, #2f9e4f 250deg 360deg);
  display: flex;
  align-items: center;
  justify-content: center;
}
.chrome-dot { width: 15px; height: 15px; border-radius: 50%; background: #4a8df0; border: 2.500px solid #fff; }
.bd-tile { width: 30px; height: 32px; border-radius: 6px; background: #fff; display: flex; align-items: center; justify-content: center; }
.p-letter, .x-letter { position: absolute; font: bold 15px "Liberation Sans", sans-serif; color: #fff; left: 20px; top: 16px; }
.acro { width: 29px; height: 29px; background: #1d1013; border: 2px solid #c0281c; display: flex; align-items: center; justify-content: center; }
.tray { margin-left: auto; display: flex; align-items: center; height: 100%; width: 236px; flex: none; padding-left: 2px; white-space: nowrap; }
.tray > * { flex: none; }
.tr-mic { margin-left: 14px; }
.tr-bat { margin-left: 13px; }
.tr-wifi { margin-left: 13px; }
.tr-vol { margin-left: 11px; }
.ime { font-size: 21px; margin-left: 8px; }
.clock { display: flex; flex-direction: column; align-items: flex-start; margin-left: 13px; font-size: 16px; line-height: 23px; width: 60px; }
.clock span:first-child { margin-left: 18px; }

/* overlays */
.timer {
  position: absolute;
  left: 1619px;
  top: 676px;
  width: 61px;
  height: 61px;
  border-radius: 50%;
  background: radial-gradient(circle at 60% 40%, #3c8bf6 0 55%, #4a9cf8 80%, #6fb9fb 100%);
  border: 3px solid #f4fbff;
  box-shadow: 0 1px 4px rgba(0,0,0,.2);
  color: #d8efff;
  font-size: 16px;
  display: flex;
  align-items: center;
  justify-content: center;
}
.cursor { position: absolute; left: 1114px; top: 798px; }
```
